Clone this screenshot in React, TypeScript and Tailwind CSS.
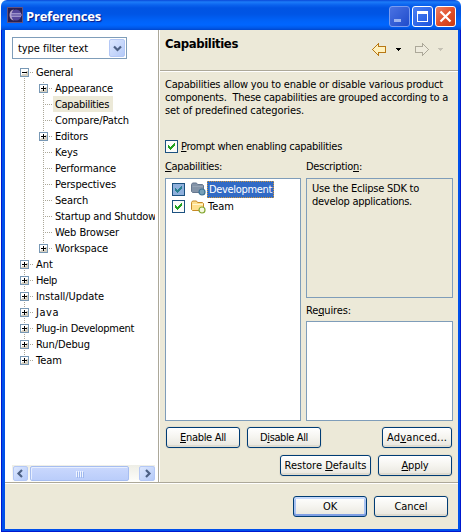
import { useLayoutEffect, useRef, type ReactNode } from 'react';

/** Single-line label whose tracking is adjusted so that it spans `w` pixels. */
function Label({ w, className = '', children }: { w: number; className?: string; children: ReactNode }) {
  const ref = useRef<HTMLSpanElement>(null);
  useLayoutEffect(() => {
    const el = ref.current;
    if (!el) return;
    el.style.letterSpacing = '0px';
    const count = (el.textContent ?? '').length;
    const natural = el.getBoundingClientRect().width;
    el.style.letterSpacing = `${(w - natural) / count}px`;
  }, [w]);
  return (
    <span ref={ref} className={`inline-block shrink-0 whitespace-pre ${className}`}>
      {children}
    </span>
  );
}

function Key({ children }: { children: ReactNode }) {
  return <span className="underline decoration-1 underline-offset-1">{children}</span>;
}

function Button({ w, className, primary, children }: { w: number; className: string; primary?: boolean; children: ReactNode }) {
  return (
    <button
      className={`flex h-[21px] shrink-0 items-center justify-center rounded-[3px] border border-[#003c74] bg-linear-to-b from-white via-[#f5f4ef] to-[#e8e6de] ${
        primary ? 'shadow-[inset_0_2px_0_#c7dafb,inset_0_-2px_0_#7f9fe4,inset_2px_0_0_#a9c3f2,inset_-2px_0_0_#a9c3f2]' : 'shadow-[inset_0_-2px_0_#dedbd0,0_0_0_1px_#e4e0d0]'
      } ${className}`}
    >
      <Label w={w}>{children}</Label>
    </button>
  );
}

function Check({ selected }: { selected?: boolean }) {
  return (
    <svg width="13" height="13" viewBox="0 0 13 13" shapeRendering="crispEdges" className="shrink-0">
      <rect width="13" height="13" fill="#1c5180" />
      <rect x="1" y="1" width="11" height="11" fill={selected ? '#8fb0dc' : '#fbfbf9'} />
      <path d="M3 5h1v1h1v1h1v-1h1v-1h1v-1h1v-1h1v3h-1v1h-1v1h-1v1h-1v1h-1v-1h-1v-1h-1z" fill={selected ? '#288090' : '#21a121'} />
    </svg>
  );
}

function Folder({ selected }: { selected?: boolean }) {
  const line = selected ? '#66778f' : '#c78a26';
  const ring = selected ? '#3c7295' : '#83a631';
  return (
    <svg width="15" height="14" viewBox="0 0 15 14" className="shrink-0">
      <path d="M.5 9.500v-7l1-1.500h4l1 1.500h5l1 1v6l-1 1h-10z" fill={selected ? '#8494a8' : '#ffdf8e'} stroke={line} />
      <path d="M1.500 4.500h10.500" stroke={selected ? '#96a4b5' : '#fff5ce'} />
      <circle cx="11" cy="10" r="3" fill={selected ? '#76a0b8' : '#f4f8df'} stroke={ring} strokeWidth="1.200" />
    </svg>
  );
}

function Expander({ open }: { open?: boolean }) {
  return (
    <svg width="9" height="9" viewBox="0 0 9 9" shapeRendering="crispEdges" className="relative shrink-0">
      <rect width="9" height="9" fill="#7898b5" />
      <rect x="1" y="1" width="7" height="7" fill="#fff" />
      <path d="M2 6h6v2h-7v-1h1zM6 3h2v3h-2z" fill="#d6d0c2" />
      <path d={open ? 'M2 4h5v1h-5z' : 'M2 4h5v1h-5zM4 2h1v5h-1z'} fill="#000" />
    </svg>
  );
}

type Node = { text: string; w: number; box?: 'open' | 'closed'; child?: boolean; selected?: boolean };

const nodes: Node[] = [
  { text: 'General', w: 37, box: 'open' },
  { text: 'Appearance', w: 58, box: 'closed', child: true },
  { text: 'Capabilities', w: 54, child: true, selected: true },
  { text: 'Compare/Patch', w: 74, child: true },
  { text: 'Editors', w: 33, box: 'closed', child: true },
  { text: 'Keys', w: 23, child: true },
  { text: 'Performance', w: 61, child: true },
  { text: 'Perspectives', w: 61, child: true },
  { text: 'Search', w: 33, child: true },
  { text: 'Startup and Shutdow', w: 101, child: true },
  { text: 'Web Browser', w: 64, child: true },
  { text: 'Workspace', w: 53, box: 'closed', child: true },
  { text: 'Ant', w: 17, box: 'closed' },
  { text: 'Help', w: 21, box: 'closed' },
  { text: 'Install/Update', w: 68, box: 'closed' },
  { text: 'Java', w: 23, box: 'closed' },
  { text: 'Plug-in Development', w: 98, box: 'closed' },
  { text: 'Run/Debug', w: 54, box: 'closed' },
  { text: 'Team', w: 26, box: 'closed' },
];

function Tree() {
  return (
    <div className="relative mt-[5px] ml-[7px] h-[401px] w-[143px] overflow-hidden">
      <svg className="absolute top-0 left-0" width="60" height="304" shapeRendering="crispEdges">
        <path d="M12.500 14V296M31.500 18V184" stroke="#aca899" strokeDasharray="1 1" fill="none" />
      </svg>
      {nodes.map((n) => (
        <div key={n.text} className={`flex h-4 items-center ${n.child ? 'pl-[27px]' : 'pl-2'}`}>
          {n.box ? <Expander open={n.box === 'open'} /> : <span className="w-[5px] shrink-0" />}
          <svg width={n.box ? 5 : 9} height="1" className="shrink-0" shapeRendering="crispEdges">
            <path d="M1 .5H9" stroke="#aca899" strokeDasharray="1 1" />
          </svg>
          <span className={`flex h-4 shrink-0 items-center ${n.selected ? 'bg-[#ece9d8] pr-1' : ''} pl-[2px]`}>
            <Label w={n.w}>{n.text}</Label>
          </span>
        </div>
      ))}
    </div>
  );
}

function Chevron({ d, className = '' }: { d: string; className?: string }) {
  return (
    <span className={`flex shrink-0 items-center justify-center rounded-[2px] border border-[#b4c8f6] bg-linear-to-br from-[#dce7fe] to-[#b5caf8] ${className}`}>
      <svg width="9" height="9" viewBox="0 0 9 9" fill="none" stroke="#4d6185" strokeWidth="2.200">
        <path d={d} />
      </svg>
    </span>
  );
}

function ScrollBar() {
  return (
    <div className="ml-[7px] flex h-[17px] w-[143px] items-center bg-linear-to-b from-[#eeeee6] to-[#fefefb]">
      <Chevron d="M6 1L2.500 4.500L6 8" className="ml-px h-[15px] w-[15px]" />
      <span className="ml-[2px] flex h-[15px] w-[99px] items-center justify-center gap-px rounded-[2px] border border-[#a6bdf0] bg-linear-to-b from-[#cad8fd] to-[#bacdfa] shadow-[inset_1px_1px_0_#e6eeff]">
        {[0, 1, 2, 3].map((i) => (
          <i key={i} className="h-[6px] w-px bg-[#f0f5ff] shadow-[1px_1px_0_#9fb8ee]" />
        ))}
      </span>
      <Chevron d="M3 1L6.500 4.500L3 8" className="ml-auto h-[15px] w-[16px]" />
    </div>
  );
}

function Arrow({ right }: { right?: boolean }) {
  return (
    <svg width="15" height="13" viewBox="0 0 15 13" className={right ? '-scale-x-100' : ''} shapeRendering="crispEdges">
      <path
        d="M.5 6.500L6.500 .5V3.500H13.500V9.500H6.500V12.500Z"
        fill={right ? '#eeebdd' : '#fff1bd'}
        stroke={right ? '#aca899' : '#b87814'}
      />
    </svg>
  );
}

function Caret({ fill }: { fill: string }) {
  return (
    <svg width="5" height="3" viewBox="0 0 5 3" shapeRendering="crispEdges">
      <path d="M0 0h5v1h-1v1h-1v1h-1v-1h-1v-1h-1z" fill={fill} />
    </svg>
  );
}

function TitleBar() {
  return (
    <header className="flex h-[30px] shrink-0 items-center rounded-t-[6px] bg-[linear-gradient(to_bottom,#0a48d8_0,#1c7cf8_2px,#0a62ee_5px,#0054e3_8px,#0055e5_14px,#0063f9_21px,#0066ff_25px,#0058e8_28px,#0046cc_30px)] pl-[6px] pr-[5px]">
      <svg width="16" height="16" viewBox="0 0 16 16">
        <rect width="16" height="16" fill="#292052" />
        <rect x=".5" y=".5" width="15" height="15" fill="none" stroke="#62527f" />
        <circle cx="9" cy="8" r="5.500" fill="#55469a" />
        <path d="M7 2.500C1 3 1 13 7 13.500C3.500 11 3.500 5 7 2.500Z" fill="#b9a8cb" />
        <path d="M3 6.500H14M3 8H15M3 9.500H14" stroke="#b0a6d8" strokeWidth=".8" />
      </svg>
      <h1 className="mt-[2px] ml-[3px] font-['Open_Sans','Noto_Sans',sans-serif] text-[13px] leading-4 font-bold text-white [text-shadow:1px_1px_1px_#0a1883]">
        <Label w={75}>Preferences</Label>
      </h1>
      <div className="mt-[3px] ml-auto flex gap-[2px]">
        <span className="flex h-[21px] w-[21px] rounded-[3px] border border-[#7a9cf0] bg-linear-to-br from-[#4a72e2] to-[#1f4bcb]">
          <i className="mt-[12px] ml-[4px] h-[3px] w-[7px] bg-[#9cb4f0]" />
        </span>
        <span className="flex h-[21px] w-[21px] rounded-[3px] border border-white bg-linear-to-br from-[#4b80f4] to-[#1b52dd]">
          <i className="mt-[4px] ml-[4px] h-[11px] w-[11px] border border-t-[3px] border-white" />
        </span>
        <span className="flex h-[21px] w-[21px] items-center justify-center rounded-[3px] border border-white bg-linear-to-br from-[#ec8165] via-[#e2502a] to-[#c93a12]">
          <svg width="13" height="13" viewBox="0 0 13 13">
            <path d="M1.500 1.500L11.500 11.500M11.500 1.500L1.500 11.500" stroke="#fff" strokeWidth="2.200" />
          </svg>
        </span>
      </div>
    </header>
  );
}

export default function App() {
  return (
    <div className="h-[532px] w-[461px] overflow-hidden bg-white pl-px font-['DejaVu_Sans_Condensed','DejaVu_Sans',sans-serif] text-[11px] leading-[13px] text-black">
      <div className="flex h-[532px] w-[460px] flex-col">
        <TitleBar />
        <div className="h-[502px] border-x border-b border-[#0019cf]">
          <div className="flex h-[501px] flex-col border-r-2 border-b-2 border-l-[3px] border-[#0050ea] bg-[#ece9d8]">
            <div className="flex h-[452px] shrink-0">
              <aside className="w-[154px] shrink-0 overflow-hidden border-r border-[#aca899] bg-white">
                <div className="mt-[7px] ml-[7px] flex h-[22px] w-[115px] items-center border border-[#7f9db9] bg-white pr-px pl-[5px]">
                  <Label w={70}>type filter text</Label>
                  <Chevron d="M1 2.500L4.500 6L8 2.500" className="ml-auto h-[18px] w-[16px]" />
                </div>
                <Tree />
                <ScrollBar />
              </aside>

              <main className="flex min-w-0 flex-1 flex-col border-l border-white">
                <div className="flex h-[41px] shrink-0 border-b border-[#aca899] pr-[15px] pl-[5px] shadow-[0_1px_0_#fff]">
                  <h2 className="mt-[6px] text-[13px] leading-4 font-bold">
                    <Label w={73}>Capabilities</Label>
                  </h2>
                  <div className="mt-[13px] ml-auto flex h-[13px] items-center">
                    <Arrow />
                    <span className="mr-[13px] ml-[9px] flex"><Caret fill="#000" /></span>
                    <Arrow right />
                    <span className="ml-[9px] flex"><Caret fill="#c5c2b5" /></span>
                  </div>
                </div>

                <div className="mt-[7px] ml-[5px] flex flex-col items-start">
                  <Label w={278}>Capabilities allow you to enable or disable various product</Label>
                  <Label w={283}>{'components.  These capabilities are grouped according to a'}</Label>
                  <Label w={139}>set of predefined categories.</Label>
                </div>

                <label className="mt-[22px] ml-[5px] flex h-[14px] items-center gap-[3px]">
                  <Check />
                  <Label w={161}><Key>P</Key>rompt when enabling capabilities</Label>
                </label>

                <div className="mt-[7px] ml-[5px] flex gap-[5px]">
                  <section className="w-[136px]">
                    <Label w={57} className="h-[18px]"><Key>C</Key>apabilities:</Label>
                    <div className="h-[243px] border border-[#7f9db9] bg-white pt-px pl-[6px]">
                      <div className="flex h-[18px] items-center">
                        <Check selected />
                        <span className="ml-[6px] flex"><Folder selected /></span>
                        <span className="ml-px flex h-[17px] w-[67px] items-center border border-dotted border-[#ce963a] bg-[#316ac5] pl-px text-white">
                          <Label w={63}>Development</Label>
                        </span>
                      </div>
                      <div className="flex h-[17px] items-center">
                        <Check />
                        <span className="ml-[6px] flex"><Folder /></span>
                        <span className="ml-[2px] flex"><Label w={26}>Team</Label></span>
                      </div>
                    </div>
                  </section>
                  <section className="w-[147px]">
                    <Label w={56} className="h-[18px]">Descriptio<Key>n</Key>:</Label>
                    <div className="flex h-[120px] flex-col items-start border border-[#7f9db9] pt-[3px] pl-[5px]">
                      <Label w={107}>Use the Eclipse SDK to</Label>
                      <Label w={100}>develop applications.</Label>
                    </div>
                    <Label w={45} className="mt-[6px] h-[17px]">Re<Key>q</Key>uires:</Label>
                    <div className="h-[100px] border border-[#7f9db9] bg-white" />
                  </section>
                </div>

                <div className="mt-[6px] ml-[6px] flex w-[286px] gap-[7px]">
                  <Button w={46} className="w-[74px]"><Key>E</Key>nable All</Button>
                  <Button w={48} className="w-[74px]">D<Key>i</Key>sable All</Button>
                  <Button w={60} className="ml-auto w-[70px]">Ad<Key>v</Key>anced...</Button>
                </div>
                <div className="mt-[7px] ml-[6px] flex w-[286px] justify-end gap-[7px]">
                  <Button w={82} className="w-[91px]">Restore <Key>D</Key>efaults</Button>
                  <Button w={27} className="w-[74px]"><Key>A</Key>pply</Button>
                </div>
              </main>
            </div>
            <footer className="flex flex-1 justify-end gap-[7px] border-t border-[#aca899] pt-[13px] pr-[10px] shadow-[inset_0_1px_0_#fff]">
              <Button w={14} primary className="w-[74px]">OK</Button>
              <Button w={33} className="w-[74px]">Cancel</Button>
            </footer>
          </div>
        </div>
      </div>
    </div>
  );
}
